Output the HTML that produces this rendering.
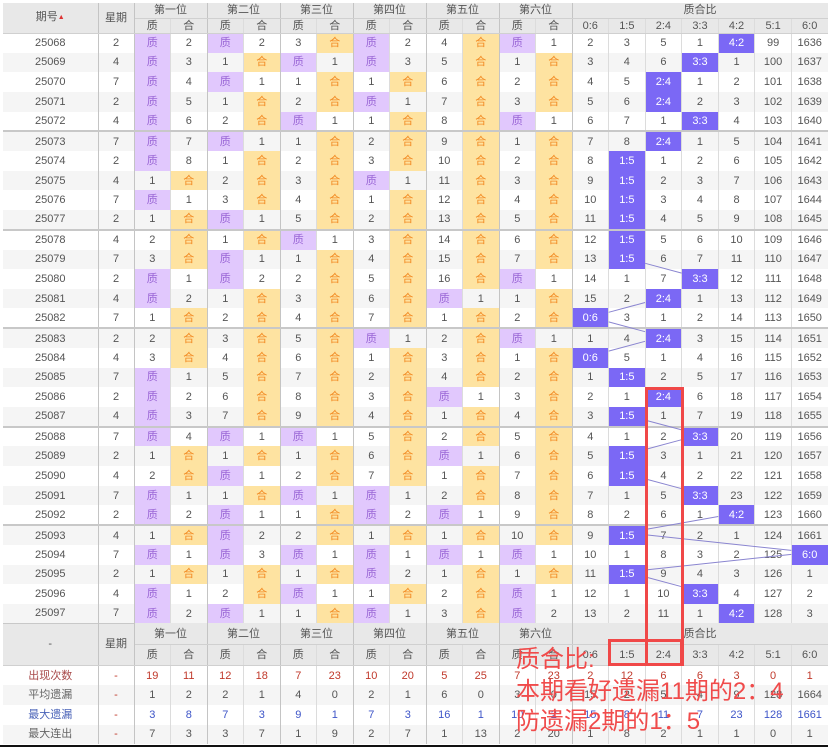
<!DOCTYPE html>
<html><head><meta charset="utf-8">
<style>
html,body{margin:0;padding:0;background:#fff;width:828px;height:747px;overflow:hidden;position:relative}
body{font-family:"Liberation Sans","Noto Sans CJK SC",sans-serif;font-size:11px;color:#555}
table{position:absolute;left:3px;top:3px;width:825px;border-collapse:collapse;table-layout:fixed;text-align:center}
td,th{padding:0;font-weight:normal;border-right:1px solid #dcdcdc;overflow:hidden;white-space:nowrap;line-height:12px}
th{background:#e8e8e8;color:#555;border-bottom:1px solid #d0d0d0}
.hd tr{height:15px}
.ft tr.f1{height:21px}
.ft tr.f2{height:21px}
.bd tr{height:19.65px}
.bd tr.s{height:19.9px}
.bd tr:nth-child(even) td{background:#f5f5f5}
.bd tr.s td{border-bottom:2px solid #c8c8c8}
.st tr{height:19.7px}
.st tr:nth-child(even) td{background:#f5f5f5}
.g{border-right:1px solid #c4c4c4!important}
.bd td.z,.bd tr:nth-child(even) td.z{background:#e1c8fd;color:#9a66d6}
.bd td.h,.bd tr:nth-child(even) td.h{background:#fee3a1;color:#f28a22}
.bd td.r,.bd tr:nth-child(even) td.r{background:#7b68f5;color:#fff}
.c1 td{color:#c0392b}
.c1 td:first-child{color:#a84a4a}
.c3 td{color:#3e55c8}
.c3 td:first-child{color:#4a63b8}
.c2 td:first-child,.c4 td:first-child{color:#666}
td.d{color:#c0392b!important}
.red{position:absolute;border:3.5px solid #f04848;box-sizing:border-box}
.txt{position:absolute;left:516px;color:#f04b4b;font-size:24px;line-height:30px;font-family:"Liberation Sans","Noto Sans CJK SC",sans-serif;white-space:nowrap}
</style></head><body>
<table>
<colgroup><col style="width:95px"><col style="width:36px">
<col style="width:36.5px"><col style="width:36.5px"><col style="width:36.5px"><col style="width:36.5px"><col style="width:36.5px"><col style="width:36.5px"><col style="width:36.5px"><col style="width:36.5px"><col style="width:36.5px"><col style="width:36.5px"><col style="width:36.5px"><col style="width:36.5px">
<col style="width:36.57px"><col style="width:36.57px"><col style="width:36.57px"><col style="width:36.57px"><col style="width:36.57px"><col style="width:36.57px"><col style="width:36.57px"></colgroup>
<tbody class="hd">
<tr><th rowspan="2" class="g">期号<span style="font-size:7px;color:#d33;vertical-align:1px">▲</span></th><th rowspan="2" class="g">星期</th><th colspan="2" class="g">第一位</th><th colspan="2" class="g">第二位</th><th colspan="2" class="g">第三位</th><th colspan="2" class="g">第四位</th><th colspan="2" class="g">第五位</th><th colspan="2" class="g">第六位</th><th colspan="7">质合比</th></tr>
<tr><th>质</th><th class="g">合</th><th>质</th><th class="g">合</th><th>质</th><th class="g">合</th><th>质</th><th class="g">合</th><th>质</th><th class="g">合</th><th>质</th><th class="g">合</th><th>0:6</th><th>1:5</th><th>2:4</th><th>3:3</th><th>4:2</th><th>5:1</th><th>6:0</th></tr>
</tbody>
<tbody class="bd">
<tr><td class="g">25068</td><td class="g">2</td><td class="z">质</td><td class="g">2</td><td class="z">质</td><td class="g">2</td><td>3</td><td class="h g">合</td><td class="z">质</td><td class="g">2</td><td>4</td><td class="h g">合</td><td class="z">质</td><td class="g">1</td><td>2</td><td>3</td><td>5</td><td>1</td><td class="r">4:2</td><td>99</td><td>1636</td></tr>
<tr><td class="g">25069</td><td class="g">4</td><td class="z">质</td><td class="g">3</td><td>1</td><td class="h g">合</td><td class="z">质</td><td class="g">1</td><td class="z">质</td><td class="g">3</td><td>5</td><td class="h g">合</td><td>1</td><td class="h g">合</td><td>3</td><td>4</td><td>6</td><td class="r">3:3</td><td>1</td><td>100</td><td>1637</td></tr>
<tr><td class="g">25070</td><td class="g">7</td><td class="z">质</td><td class="g">4</td><td class="z">质</td><td class="g">1</td><td>1</td><td class="h g">合</td><td>1</td><td class="h g">合</td><td>6</td><td class="h g">合</td><td>2</td><td class="h g">合</td><td>4</td><td>5</td><td class="r">2:4</td><td>1</td><td>2</td><td>101</td><td>1638</td></tr>
<tr><td class="g">25071</td><td class="g">2</td><td class="z">质</td><td class="g">5</td><td>1</td><td class="h g">合</td><td>2</td><td class="h g">合</td><td class="z">质</td><td class="g">1</td><td>7</td><td class="h g">合</td><td>3</td><td class="h g">合</td><td>5</td><td>6</td><td class="r">2:4</td><td>2</td><td>3</td><td>102</td><td>1639</td></tr>
<tr class="s"><td class="g">25072</td><td class="g">4</td><td class="z">质</td><td class="g">6</td><td>2</td><td class="h g">合</td><td class="z">质</td><td class="g">1</td><td>1</td><td class="h g">合</td><td>8</td><td class="h g">合</td><td class="z">质</td><td class="g">1</td><td>6</td><td>7</td><td>1</td><td class="r">3:3</td><td>4</td><td>103</td><td>1640</td></tr>
<tr><td class="g">25073</td><td class="g">7</td><td class="z">质</td><td class="g">7</td><td class="z">质</td><td class="g">1</td><td>1</td><td class="h g">合</td><td>2</td><td class="h g">合</td><td>9</td><td class="h g">合</td><td>1</td><td class="h g">合</td><td>7</td><td>8</td><td class="r">2:4</td><td>1</td><td>5</td><td>104</td><td>1641</td></tr>
<tr><td class="g">25074</td><td class="g">2</td><td class="z">质</td><td class="g">8</td><td>1</td><td class="h g">合</td><td>2</td><td class="h g">合</td><td>3</td><td class="h g">合</td><td>10</td><td class="h g">合</td><td>2</td><td class="h g">合</td><td>8</td><td class="r">1:5</td><td>1</td><td>2</td><td>6</td><td>105</td><td>1642</td></tr>
<tr><td class="g">25075</td><td class="g">4</td><td>1</td><td class="h g">合</td><td>2</td><td class="h g">合</td><td>3</td><td class="h g">合</td><td class="z">质</td><td class="g">1</td><td>11</td><td class="h g">合</td><td>3</td><td class="h g">合</td><td>9</td><td class="r">1:5</td><td>2</td><td>3</td><td>7</td><td>106</td><td>1643</td></tr>
<tr><td class="g">25076</td><td class="g">7</td><td class="z">质</td><td class="g">1</td><td>3</td><td class="h g">合</td><td>4</td><td class="h g">合</td><td>1</td><td class="h g">合</td><td>12</td><td class="h g">合</td><td>4</td><td class="h g">合</td><td>10</td><td class="r">1:5</td><td>3</td><td>4</td><td>8</td><td>107</td><td>1644</td></tr>
<tr class="s"><td class="g">25077</td><td class="g">2</td><td>1</td><td class="h g">合</td><td class="z">质</td><td class="g">1</td><td>5</td><td class="h g">合</td><td>2</td><td class="h g">合</td><td>13</td><td class="h g">合</td><td>5</td><td class="h g">合</td><td>11</td><td class="r">1:5</td><td>4</td><td>5</td><td>9</td><td>108</td><td>1645</td></tr>
<tr><td class="g">25078</td><td class="g">4</td><td>2</td><td class="h g">合</td><td>1</td><td class="h g">合</td><td class="z">质</td><td class="g">1</td><td>3</td><td class="h g">合</td><td>14</td><td class="h g">合</td><td>6</td><td class="h g">合</td><td>12</td><td class="r">1:5</td><td>5</td><td>6</td><td>10</td><td>109</td><td>1646</td></tr>
<tr><td class="g">25079</td><td class="g">7</td><td>3</td><td class="h g">合</td><td class="z">质</td><td class="g">1</td><td>1</td><td class="h g">合</td><td>4</td><td class="h g">合</td><td>15</td><td class="h g">合</td><td>7</td><td class="h g">合</td><td>13</td><td class="r">1:5</td><td>6</td><td>7</td><td>11</td><td>110</td><td>1647</td></tr>
<tr><td class="g">25080</td><td class="g">2</td><td class="z">质</td><td class="g">1</td><td class="z">质</td><td class="g">2</td><td>2</td><td class="h g">合</td><td>5</td><td class="h g">合</td><td>16</td><td class="h g">合</td><td class="z">质</td><td class="g">1</td><td>14</td><td>1</td><td>7</td><td class="r">3:3</td><td>12</td><td>111</td><td>1648</td></tr>
<tr><td class="g">25081</td><td class="g">4</td><td class="z">质</td><td class="g">2</td><td>1</td><td class="h g">合</td><td>3</td><td class="h g">合</td><td>6</td><td class="h g">合</td><td class="z">质</td><td class="g">1</td><td>1</td><td class="h g">合</td><td>15</td><td>2</td><td class="r">2:4</td><td>1</td><td>13</td><td>112</td><td>1649</td></tr>
<tr class="s"><td class="g">25082</td><td class="g">7</td><td>1</td><td class="h g">合</td><td>2</td><td class="h g">合</td><td>4</td><td class="h g">合</td><td>7</td><td class="h g">合</td><td>1</td><td class="h g">合</td><td>2</td><td class="h g">合</td><td class="r">0:6</td><td>3</td><td>1</td><td>2</td><td>14</td><td>113</td><td>1650</td></tr>
<tr><td class="g">25083</td><td class="g">2</td><td>2</td><td class="h g">合</td><td>3</td><td class="h g">合</td><td>5</td><td class="h g">合</td><td class="z">质</td><td class="g">1</td><td>2</td><td class="h g">合</td><td class="z">质</td><td class="g">1</td><td>1</td><td>4</td><td class="r">2:4</td><td>3</td><td>15</td><td>114</td><td>1651</td></tr>
<tr><td class="g">25084</td><td class="g">4</td><td>3</td><td class="h g">合</td><td>4</td><td class="h g">合</td><td>6</td><td class="h g">合</td><td>1</td><td class="h g">合</td><td>3</td><td class="h g">合</td><td>1</td><td class="h g">合</td><td class="r">0:6</td><td>5</td><td>1</td><td>4</td><td>16</td><td>115</td><td>1652</td></tr>
<tr><td class="g">25085</td><td class="g">7</td><td class="z">质</td><td class="g">1</td><td>5</td><td class="h g">合</td><td>7</td><td class="h g">合</td><td>2</td><td class="h g">合</td><td>4</td><td class="h g">合</td><td>2</td><td class="h g">合</td><td>1</td><td class="r">1:5</td><td>2</td><td>5</td><td>17</td><td>116</td><td>1653</td></tr>
<tr><td class="g">25086</td><td class="g">2</td><td class="z">质</td><td class="g">2</td><td>6</td><td class="h g">合</td><td>8</td><td class="h g">合</td><td>3</td><td class="h g">合</td><td class="z">质</td><td class="g">1</td><td>3</td><td class="h g">合</td><td>2</td><td>1</td><td class="r">2:4</td><td>6</td><td>18</td><td>117</td><td>1654</td></tr>
<tr class="s"><td class="g">25087</td><td class="g">4</td><td class="z">质</td><td class="g">3</td><td>7</td><td class="h g">合</td><td>9</td><td class="h g">合</td><td>4</td><td class="h g">合</td><td>1</td><td class="h g">合</td><td>4</td><td class="h g">合</td><td>3</td><td class="r">1:5</td><td>1</td><td>7</td><td>19</td><td>118</td><td>1655</td></tr>
<tr><td class="g">25088</td><td class="g">7</td><td class="z">质</td><td class="g">4</td><td class="z">质</td><td class="g">1</td><td class="z">质</td><td class="g">1</td><td>5</td><td class="h g">合</td><td>2</td><td class="h g">合</td><td>5</td><td class="h g">合</td><td>4</td><td>1</td><td>2</td><td class="r">3:3</td><td>20</td><td>119</td><td>1656</td></tr>
<tr><td class="g">25089</td><td class="g">2</td><td>1</td><td class="h g">合</td><td>1</td><td class="h g">合</td><td>1</td><td class="h g">合</td><td>6</td><td class="h g">合</td><td class="z">质</td><td class="g">1</td><td>6</td><td class="h g">合</td><td>5</td><td class="r">1:5</td><td>3</td><td>1</td><td>21</td><td>120</td><td>1657</td></tr>
<tr><td class="g">25090</td><td class="g">4</td><td>2</td><td class="h g">合</td><td class="z">质</td><td class="g">1</td><td>2</td><td class="h g">合</td><td>7</td><td class="h g">合</td><td>1</td><td class="h g">合</td><td>7</td><td class="h g">合</td><td>6</td><td class="r">1:5</td><td>4</td><td>2</td><td>22</td><td>121</td><td>1658</td></tr>
<tr><td class="g">25091</td><td class="g">7</td><td class="z">质</td><td class="g">1</td><td>1</td><td class="h g">合</td><td class="z">质</td><td class="g">1</td><td class="z">质</td><td class="g">1</td><td>2</td><td class="h g">合</td><td>8</td><td class="h g">合</td><td>7</td><td>1</td><td>5</td><td class="r">3:3</td><td>23</td><td>122</td><td>1659</td></tr>
<tr class="s"><td class="g">25092</td><td class="g">2</td><td class="z">质</td><td class="g">2</td><td class="z">质</td><td class="g">1</td><td>1</td><td class="h g">合</td><td class="z">质</td><td class="g">2</td><td class="z">质</td><td class="g">1</td><td>9</td><td class="h g">合</td><td>8</td><td>2</td><td>6</td><td>1</td><td class="r">4:2</td><td>123</td><td>1660</td></tr>
<tr><td class="g">25093</td><td class="g">4</td><td>1</td><td class="h g">合</td><td class="z">质</td><td class="g">2</td><td>2</td><td class="h g">合</td><td>1</td><td class="h g">合</td><td>1</td><td class="h g">合</td><td>10</td><td class="h g">合</td><td>9</td><td class="r">1:5</td><td>7</td><td>2</td><td>1</td><td>124</td><td>1661</td></tr>
<tr><td class="g">25094</td><td class="g">7</td><td class="z">质</td><td class="g">1</td><td class="z">质</td><td class="g">3</td><td class="z">质</td><td class="g">1</td><td class="z">质</td><td class="g">1</td><td class="z">质</td><td class="g">1</td><td class="z">质</td><td class="g">1</td><td>10</td><td>1</td><td>8</td><td>3</td><td>2</td><td>125</td><td class="r">6:0</td></tr>
<tr><td class="g">25095</td><td class="g">2</td><td>1</td><td class="h g">合</td><td>1</td><td class="h g">合</td><td>1</td><td class="h g">合</td><td class="z">质</td><td class="g">2</td><td>1</td><td class="h g">合</td><td>1</td><td class="h g">合</td><td>11</td><td class="r">1:5</td><td>9</td><td>4</td><td>3</td><td>126</td><td>1</td></tr>
<tr><td class="g">25096</td><td class="g">4</td><td class="z">质</td><td class="g">1</td><td>2</td><td class="h g">合</td><td class="z">质</td><td class="g">1</td><td>1</td><td class="h g">合</td><td>2</td><td class="h g">合</td><td class="z">质</td><td class="g">1</td><td>12</td><td>1</td><td>10</td><td class="r">3:3</td><td>4</td><td>127</td><td>2</td></tr>
<tr><td class="g">25097</td><td class="g">7</td><td class="z">质</td><td class="g">2</td><td class="z">质</td><td class="g">1</td><td>1</td><td class="h g">合</td><td class="z">质</td><td class="g">1</td><td>3</td><td class="h g">合</td><td class="z">质</td><td class="g">2</td><td>13</td><td>2</td><td>11</td><td>1</td><td class="r">4:2</td><td>128</td><td>3</td></tr>
</tbody>
<tbody class="ft">
<tr class="f1"><th rowspan="2" class="g" style="border-top:1px solid #c8c8c8">-</th><th rowspan="2" class="g" style="border-top:1px solid #c8c8c8">星期</th><th colspan="2" class="g">第一位</th><th colspan="2" class="g">第二位</th><th colspan="2" class="g">第三位</th><th colspan="2" class="g">第四位</th><th colspan="2" class="g">第五位</th><th colspan="2" class="g">第六位</th><th colspan="7">质合比</th></tr>
<tr class="f2"><th>质</th><th class="g">合</th><th>质</th><th class="g">合</th><th>质</th><th class="g">合</th><th>质</th><th class="g">合</th><th>质</th><th class="g">合</th><th>质</th><th class="g">合</th><th>0:6</th><th>1:5</th><th>2:4</th><th>3:3</th><th>4:2</th><th>5:1</th><th>6:0</th></tr>
</tbody>
<tbody class="st">
<tr class="c1"><td class="g">出现次数</td><td class="g">-</td><td>19</td><td class="g">11</td><td>12</td><td class="g">18</td><td>7</td><td class="g">23</td><td>10</td><td class="g">20</td><td>5</td><td class="g">25</td><td>7</td><td class="g">23</td><td>2</td><td>12</td><td>6</td><td>6</td><td>3</td><td>0</td><td>1</td></tr>
<tr class="c2"><td class="g">平均遗漏</td><td class="g d">-</td><td>1</td><td class="g">2</td><td>2</td><td class="g">1</td><td>4</td><td class="g">0</td><td>2</td><td class="g">1</td><td>6</td><td class="g">0</td><td>3</td><td class="g">0</td><td>15</td><td>2</td><td>5</td><td>4</td><td>9</td><td>128</td><td>1664</td></tr>
<tr class="c3"><td class="g">最大遗漏</td><td class="g d">-</td><td>3</td><td class="g">8</td><td>7</td><td class="g">3</td><td>9</td><td class="g">1</td><td>7</td><td class="g">3</td><td>16</td><td class="g">1</td><td>10</td><td class="g">2</td><td>15</td><td>8</td><td>11</td><td>7</td><td>23</td><td>128</td><td>1661</td></tr>
<tr class="c4"><td class="g">最大连出</td><td class="g d">-</td><td>7</td><td class="g">3</td><td>3</td><td class="g">7</td><td>1</td><td class="g">9</td><td>2</td><td class="g">7</td><td>1</td><td class="g">13</td><td>2</td><td class="g">20</td><td>1</td><td>8</td><td>2</td><td>1</td><td>1</td><td>0</td><td>1</td></tr>
</tbody>
</table>
<svg width="828" height="747" style="position:absolute;left:0;top:0" stroke="#8a85d0" stroke-width="1">
<line x1="645.2" y1="263.3" x2="681.7" y2="273.1"/>
<line x1="645.1" y1="302.5" x2="608.6" y2="312.3"/>
<line x1="608.6" y1="321.9" x2="645.1" y2="331.7"/>
<line x1="645.1" y1="341.3" x2="608.6" y2="351.1"/>
<line x1="645.2" y1="420.1" x2="681.7" y2="429.9"/>
<line x1="681.7" y1="439.7" x2="645.2" y2="449.5"/>
<line x1="645.2" y1="478.9" x2="681.7" y2="488.7"/>
<line x1="718.3" y1="516.5" x2="645.2" y2="529.5"/>
<line x1="645.2" y1="534.8" x2="791.4" y2="550.4"/>
<line x1="791.4" y1="554.4" x2="645.2" y2="570"/>
<line x1="645.2" y1="576.9" x2="681.7" y2="586.7"/>
</svg>
<div class="red" style="left:645px;top:387px;width:39px;height:279px"></div>
<div class="red" style="left:608px;top:639px;width:75px;height:27px"></div>
<div class="txt" style="top:645px">质合比:</div>
<div class="txt" style="top:677px">本期看好遗漏11期的2：4</div>
<div class="txt" style="top:707px">防遗漏2期的1：5</div>
<div style="position:absolute;left:0;top:745px;width:828px;height:2px;background:#111"></div>
</body></html>
